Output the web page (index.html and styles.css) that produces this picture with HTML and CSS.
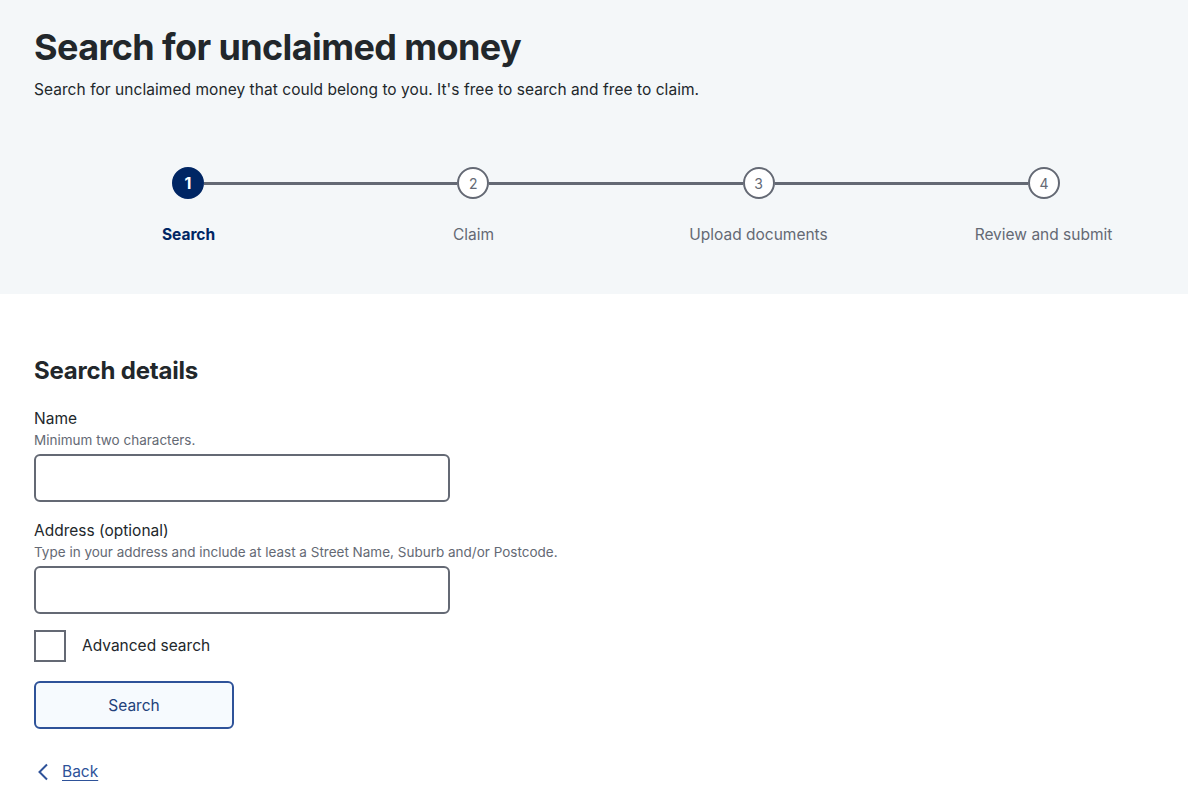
FILE: index.html
```html
<!DOCTYPE html>
<html lang="en">
<head>
<meta charset="utf-8">
<title>Search for unclaimed money</title>
<link rel="stylesheet" href="styles.css">
</head>
<body>
<header class="hero">
  <h1 class="hero-title">Search for unclaimed money</h1>
  <p class="hero-intro">Search for unclaimed money that could belong to you. It's free to search and free to claim.</p>
  <div class="stepper">
    <div class="track">
      <span class="dot dot-active">1</span>
      <span class="connector"></span>
      <span class="dot">2</span>
      <span class="connector"></span>
      <span class="dot">3</span>
      <span class="connector"></span>
      <span class="dot">4</span>
    </div>
    <ol class="step-labels">
      <li class="step-label step-label-active">Search</li>
      <li class="step-label">Claim</li>
      <li class="step-label">Upload documents</li>
      <li class="step-label">Review and submit</li>
    </ol>
  </div>
</header>
<main class="content">
  <h2 class="section-title">Search details</h2>
  <form class="form">
    <div class="field">
      <label class="field-label" for="name">Name</label>
      <span class="field-help">Minimum two characters.</span>
      <input class="field-input" id="name" type="text">
    </div>
    <div class="field">
      <label class="field-label" for="address">Address (optional)</label>
      <span class="field-help">Type in your address and include at least a Street Name, Suburb and/or Postcode.</span>
      <input class="field-input" id="address" type="text">
    </div>
    <label class="check">
      <span class="check-box"></span>
      <span class="check-text">Advanced search</span>
    </label>
    <button class="btn" type="button">Search</button>
  </form>
  <a class="back" href="#">
    <svg class="back-icon" width="12" height="18" viewBox="0 0 12 18" aria-hidden="true"><path d="M10 1.5 L2.5 9 L10 16.5" fill="none" stroke="#2e5299" stroke-width="2"/></svg>
    <span class="back-text">Back</span>
  </a>
</main>
</body>
</html>
```
FILE: styles.css
```css
* { box-sizing: border-box; }
html, body { margin: 0; padding: 0; }
body {
  font-family: "Inter", "Liberation Sans", sans-serif;
  color: #22272b;
  background: #ffffff;
  width: 1188px;
}
.hero {
  background: #f4f7f9;
  height: 294px;
  padding: 24px 0 0 34px;
}
.hero-title {
  margin: 0;
  font-size: 36px;
  line-height: 46px;
  font-weight: 700;
  letter-spacing: -0.6px;
  color: #22272b;
}
.hero-intro {
  margin: 8px 0 0;
  font-size: 15.5px;
  line-height: 24px;
  letter-spacing: 0.05px;
}
.stepper {
  margin: 65px 0 0 12px;
  width: 1140px;
}
.track {
  display: flex;
  align-items: center;
  padding: 0 126px 0 126px;
}
.dot {
  width: 32px;
  height: 32px;
  flex: none;
  border-radius: 50%;
  border: 2px solid #646974;
  background: #ffffff;
  color: #646974;
  font-size: 14px;
  display: flex;
  align-items: center;
  justify-content: center;
}
.dot-active {
  background: #002664;
  border-color: #002664;
  color: #ffffff;
  font-weight: 700;
  font-size: 16px;
}
.connector {
  flex: 1;
  height: 3px;
  background: #646974;
}
.step-labels {
  list-style: none;
  margin: 24px 0 0;
  padding: 0;
  display: grid;
  grid-template-columns: repeat(4, 285px);
}
.step-label {
  text-align: center;
  font-size: 15.5px;
  line-height: 24px;
  color: #646974;
}
.step-label-active {
  color: #002664;
  font-weight: 700;
}
.content {
  padding: 61px 0 40px 34px;
}
.section-title {
  margin: 0;
  font-size: 24px;
  line-height: 32px;
  font-weight: 700;
  letter-spacing: -0.2px;
}
.form {
  margin-top: 20px;
  display: flex;
  flex-direction: column;
  align-items: flex-start;
}
.field {
  display: flex;
  flex-direction: column;
  margin-bottom: 17px;
}
.field-label {
  font-size: 15.5px;
  line-height: 24px;
}
.field-help {
  font-size: 13.5px;
  line-height: 19px;
  color: #646974;
  margin-bottom: 4px;
}
.field-input {
  width: 416px;
  height: 48px;
  border: 2px solid #646974;
  border-radius: 6px;
  background: #ffffff;
  font: inherit;
}
.check {
  display: flex;
  align-items: center;
  gap: 16px;
  margin-top: -1px;
}
.check-box {
  width: 32px;
  height: 32px;
  border: 2px solid #646974;
  background: #ffffff;
}
.check-text {
  font-size: 15.5px;
  line-height: 24px;
}
.btn {
  margin-top: 19px;
  width: 200px;
  height: 48px;
  border: 2px solid #2e5299;
  border-radius: 6px;
  background: #f6fafe;
  color: #22417a;
  font-family: inherit;
  font-size: 15.5px;
}
.back {
  margin-top: 31px;
  display: inline-flex;
  align-items: center;
  gap: 13px;
  color: #2e5299;
  text-decoration: none;
  padding-left: 3px;
}
.back-text {
  text-decoration: underline;
  text-underline-offset: 3px;
  font-size: 15.5px;
  line-height: 24px;
}
```
